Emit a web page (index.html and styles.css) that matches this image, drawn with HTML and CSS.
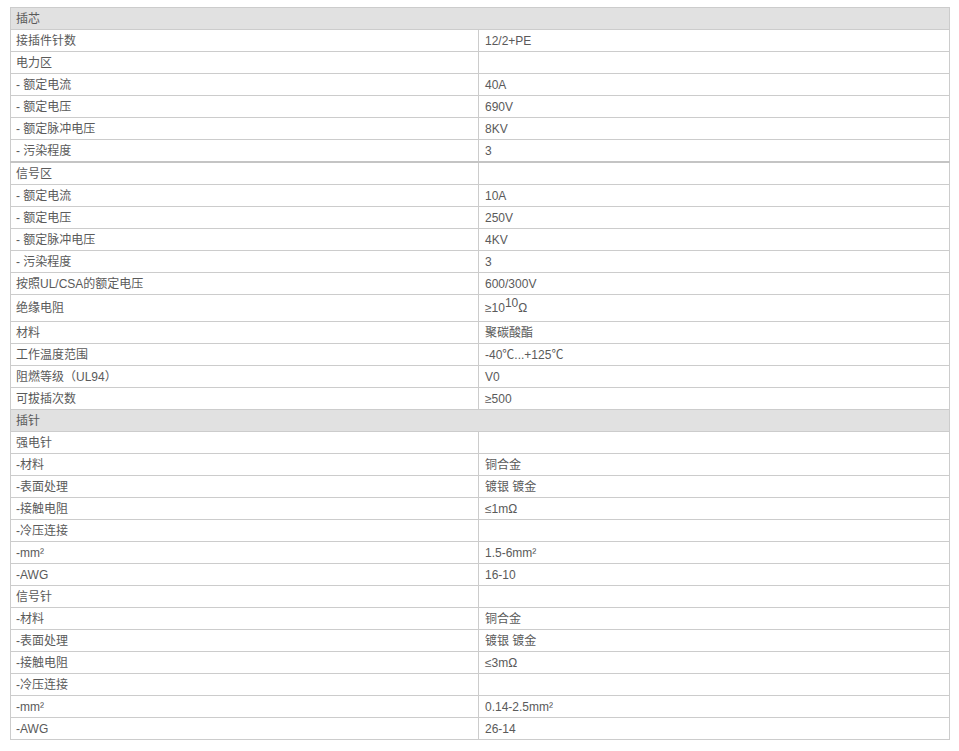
FILE: index.html
```html
<!DOCTYPE html>
<html lang="zh-CN">
<head>
<meta charset="utf-8">
<title>参数</title>
<link rel="stylesheet" href="styles.css">
</head>
<body>
<table class="spec">
<colgroup><col class="c1"><col class="c2"></colgroup>
<tbody>
<tr class="head"><td colspan="2">插芯</td></tr>
<tr><td class="k">接插件针数</td><td>12/2+PE</td></tr>
<tr><td class="k">电力区</td><td></td></tr>
<tr><td class="k">- 额定电流</td><td>40A</td></tr>
<tr><td class="k">- 额定电压</td><td>690V</td></tr>
<tr><td class="k">- 额定脉冲电压</td><td>8KV</td></tr>
<tr><td class="k">- 污染程度</td><td>3</td></tr>
<tr class="sep"><td class="k">信号区</td><td></td></tr>
<tr><td class="k">- 额定电流</td><td>10A</td></tr>
<tr><td class="k">- 额定电压</td><td>250V</td></tr>
<tr><td class="k">- 额定脉冲电压</td><td>4KV</td></tr>
<tr><td class="k">- 污染程度</td><td>3</td></tr>
<tr><td class="k">按照UL/CSA的额定电压</td><td>600/300V</td></tr>
<tr class="tall"><td class="k">绝缘电阻</td><td>≥10<sup>10</sup>Ω</td></tr>
<tr><td class="k">材料</td><td>聚碳酸酯</td></tr>
<tr><td class="k">工作温度范围</td><td>-40℃...+125℃</td></tr>
<tr><td class="k">阻燃等级（UL94）</td><td>V0</td></tr>
<tr><td class="k">可拔插次数</td><td>≥500</td></tr>
<tr class="head"><td colspan="2">插针</td></tr>
<tr><td class="k">强电针</td><td></td></tr>
<tr><td class="k">-材料</td><td>铜合金</td></tr>
<tr><td class="k">-表面处理</td><td>镀银 镀金</td></tr>
<tr><td class="k">-接触电阻</td><td>≤1mΩ</td></tr>
<tr><td class="k">-冷压连接</td><td></td></tr>
<tr><td class="k">-mm²</td><td>1.5-6mm²</td></tr>
<tr><td class="k">-AWG</td><td>16-10</td></tr>
<tr><td class="k">信号针</td><td></td></tr>
<tr><td class="k">-材料</td><td>铜合金</td></tr>
<tr><td class="k">-表面处理</td><td>镀银 镀金</td></tr>
<tr><td class="k">-接触电阻</td><td>≤3mΩ</td></tr>
<tr><td class="k">-冷压连接</td><td></td></tr>
<tr><td class="k">-mm²</td><td>0.14-2.5mm²</td></tr>
<tr><td class="k">-AWG</td><td>26-14</td></tr>
</tbody>
</table>
</body>
</html>
```
FILE: styles.css
```css
html, body {
  margin: 0;
  padding: 0;
  background: #ffffff;
}
body {
  padding: 7px 0 0 10px;
  font-family: "Liberation Sans", "Noto Sans CJK SC", Arial, sans-serif;
  font-size: 12px;
  color: #5a5a5a;
}
.spec {
  width: 940px;
  border-collapse: collapse;
  table-layout: fixed;
}
.spec col.c1 {
  width: 468px;
}
.spec td {
  border: 1px solid #cccccc;
  height: 21px;
  padding: 1px 0 0 6px;
  line-height: 20px;
  vertical-align: middle;
  box-sizing: border-box;
  white-space: nowrap;
}
.spec td.k {
  padding-left: 5px;
}
.spec tr.head td {
  background: #e1e1e1;
  padding-left: 5px;
}
.spec tr.sep td {
  border-top: 2px solid #c4c4c4;
}
.spec tr.tall td {
  height: 26px;
  line-height: 25px;
}
.spec sup {
  font-size: 12px;
  line-height: 0;
  vertical-align: 5px;
}
```
